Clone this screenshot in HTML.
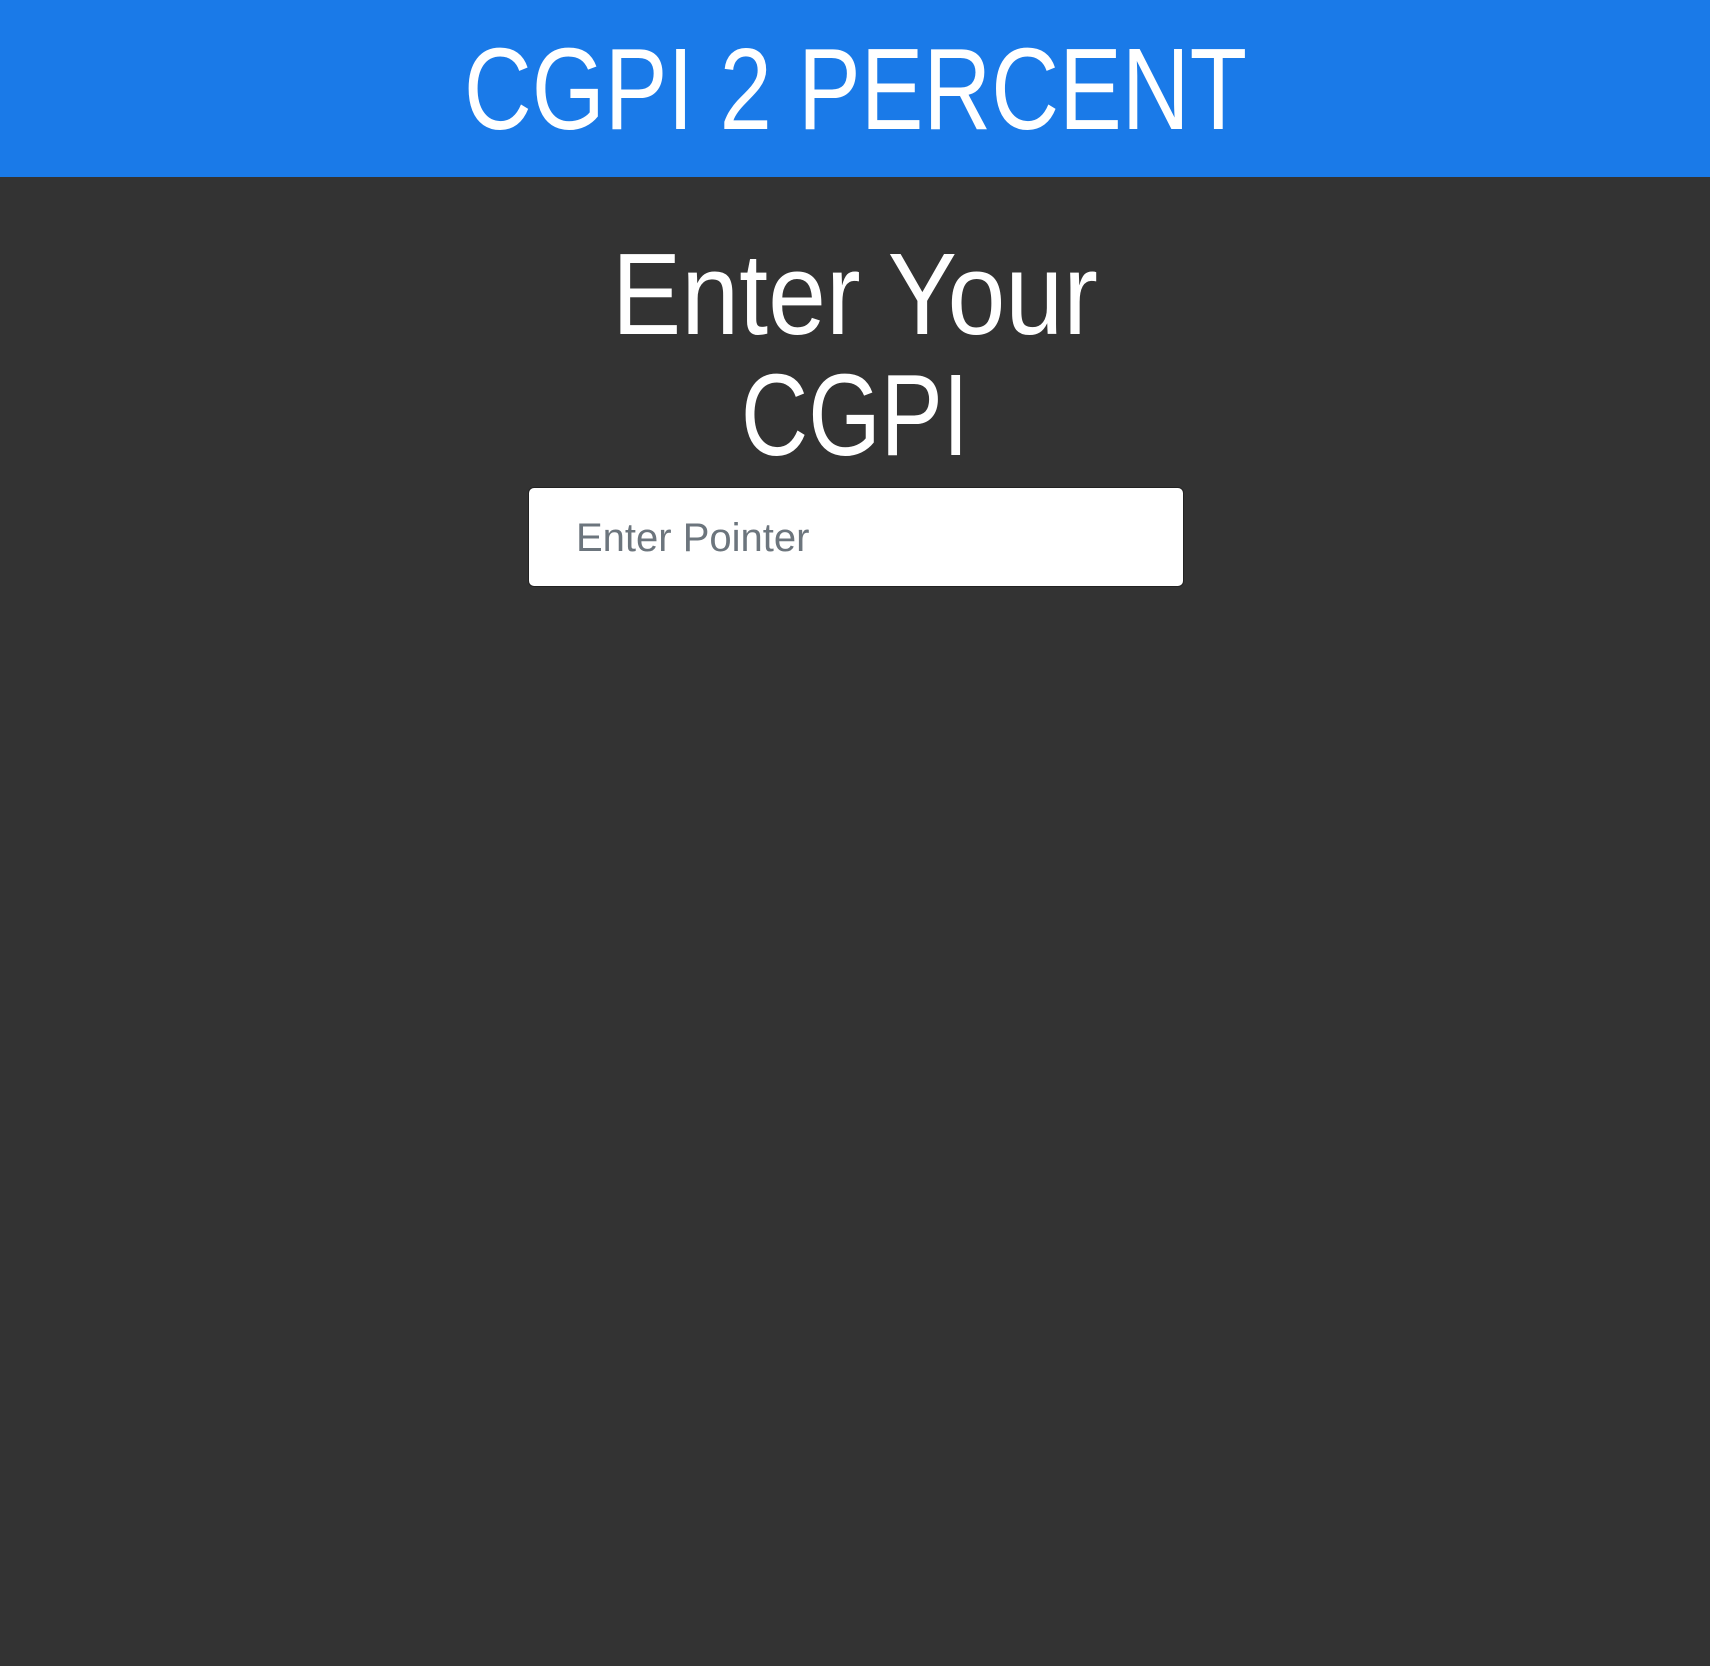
<!DOCTYPE html>
<html><head><meta charset="utf-8"><style>
html,body{margin:0;padding:0;width:1710px;height:1666px;background:#333;overflow:hidden;font-family:"Liberation Sans",sans-serif;}
.hdr{position:absolute;left:0;top:0;width:1710px;height:177px;background:#1a7ae8;}
.t{position:absolute;left:0;width:1710px;text-align:center;color:#fff;line-height:1;white-space:nowrap;}
.t span{display:inline-block;}
.inp{position:absolute;left:528px;top:487px;width:654px;height:98px;background:#fff;border:1px solid #222;border-radius:6px;}
.ph{position:absolute;left:576px;top:518px;font-size:40px;line-height:1;color:#6c757d;}
</style></head><body>
<div class="hdr"></div>
<div class="t" style="top:31px;font-size:116px;"><span style="transform:scaleX(0.81)">CGPI 2 PERCENT</span></div>
<div class="t" style="top:236px;font-size:116px;"><span style="transform:scaleX(0.897)">Enter Your</span></div>
<div class="t" style="top:357px;font-size:116px;"><span style="transform:scaleX(0.803)">CGPI</span></div>
<div class="inp"></div>
<div class="ph">Enter Pointer</div>
</body></html>
